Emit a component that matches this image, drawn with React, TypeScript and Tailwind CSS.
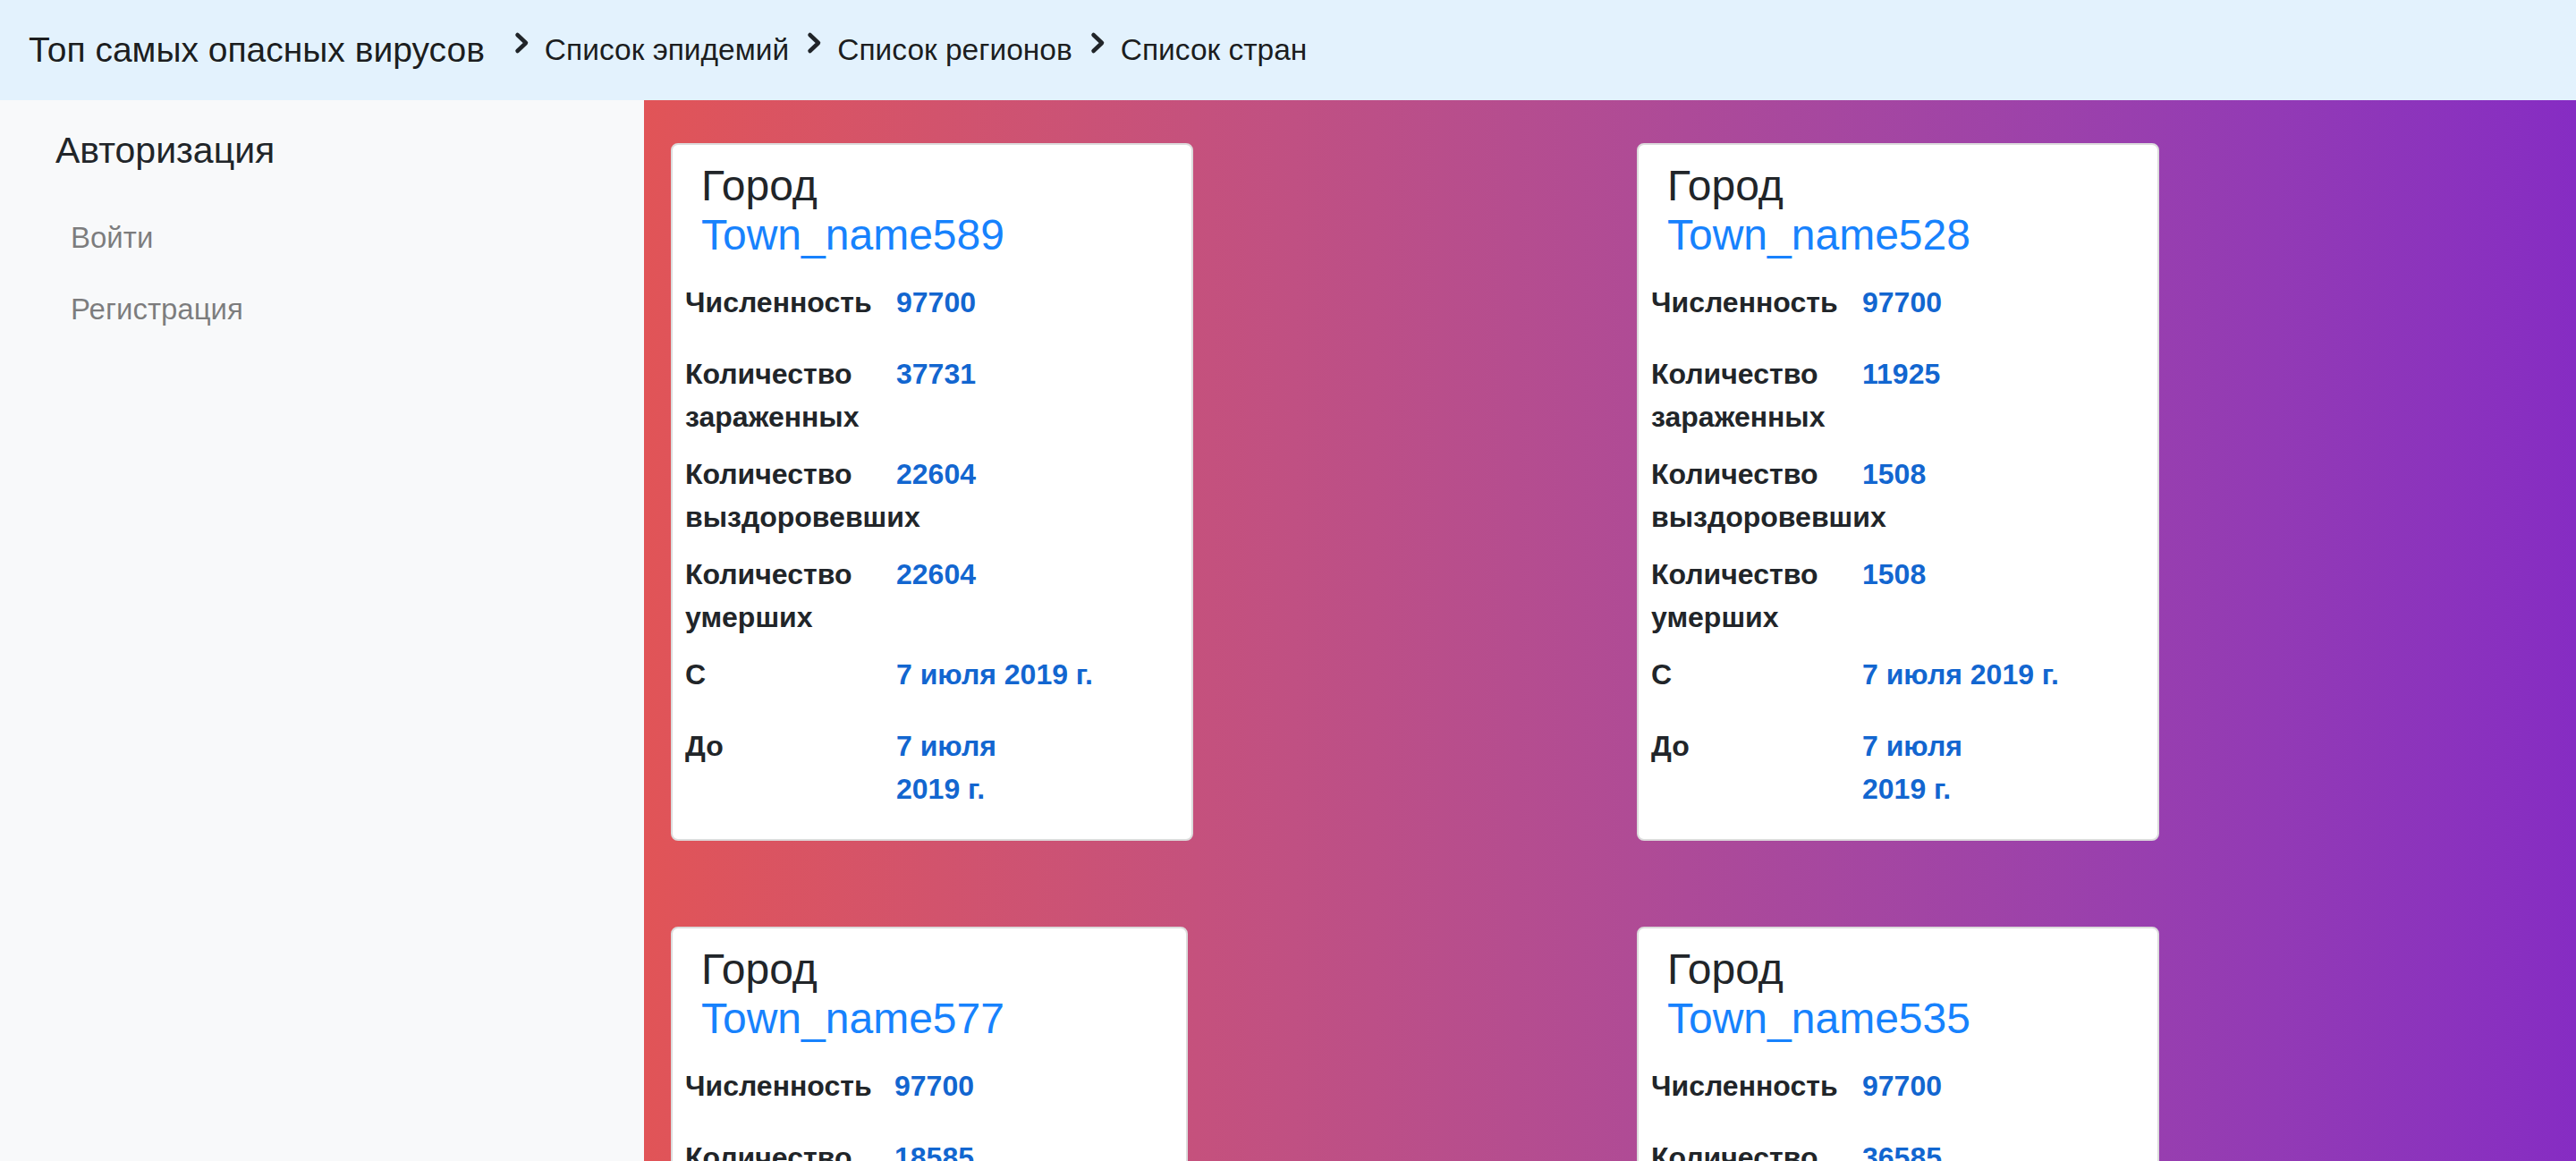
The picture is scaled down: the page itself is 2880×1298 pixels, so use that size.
import { FC } from 'react'

type Row = { label: string; value: string; wrap?: boolean }

type City = {
  name: string
  width: string
  cols: string
  rows: Row[]
}

const mkRows = (pop: string, sick: string, healed: string, dead: string): Row[] => [
  { label: 'Численность', value: pop },
  { label: 'Количество зараженных', value: sick },
  { label: 'Количество выздоровевших', value: healed },
  { label: 'Количество умерших', value: dead },
  { label: 'С', value: '7 июля 2019 г.' },
  { label: 'До', value: '7 июля 2019 г.', wrap: true },
]

const cities: City[] = [
  { name: 'Town_name589', width: 'w-[584px]', cols: 'grid-cols-[236px_1fr]', rows: mkRows('97700', '37731', '22604', '22604') },
  { name: 'Town_name528', width: 'w-[584px]', cols: 'grid-cols-[236px_1fr]', rows: mkRows('97700', '11925', '1508', '1508') },
  { name: 'Town_name577', width: 'w-[578px]', cols: 'grid-cols-[234px_1fr]', rows: mkRows('97700', '18585', '9871', '9871') },
  { name: 'Town_name535', width: 'w-[584px]', cols: 'grid-cols-[236px_1fr]', rows: mkRows('97700', '36585', '24077', '24077') },
]

const Chevron: FC = () => (
  <svg
    viewBox="0 0 17 26"
    className="w-[17px] h-[26px] mb-[16px] shrink-0"
    fill="none"
    stroke="#212529"
    strokeWidth="4.5"
    strokeLinecap="round"
    strokeLinejoin="round"
    aria-hidden="true"
  >
    <polyline points="3.5,4 13,13 3.5,22" />
  </svg>
)

const CityCard: FC<{ city: City }> = ({ city }) => (
  <div
    className={`${city.width} my-[48px] bg-white border-2 border-[#dcdcdc] rounded-lg pt-[18px] px-[14px]`}
  >
    {/* Title */}
    <h4 className="pl-[18px] text-[48px] leading-[55px] text-[#212529]">Город</h4>
    <div className="pl-[18px] text-[48px] leading-[55px] text-[#1782fd]">{city.name}</div>

    <div className="mt-[24px] text-[32px] leading-[48px] font-bold">
      {city.rows.map((row) => (
        <div key={row.label} className={`grid ${city.cols} mb-4`}>
          <div className="text-[#212529]">{row.label}</div>
          <div className="text-[#1266d0] mb-4">
            {row.wrap ? (
              <>
                7 июля
                <br />
                2019 г.
              </>
            ) : (
              row.value
            )}
          </div>
        </div>
      ))}
    </div>
  </div>
)

const App: FC = () => {
  return (
    <div className="min-h-screen flex flex-col font-['Liberation_Sans',Arial,sans-serif]">
      <header className="h-[112px] shrink-0 bg-[#e3f2fd] flex items-center pl-[32px]">
        <span className="text-[39px] leading-[60px] text-black/90">Топ самых опасных вирусов</span>
        <nav className="flex items-center ml-[33px] text-[33.5px] leading-[48px] text-black/90">
          <Chevron />
          <span className="ml-[17px]">Список эпидемий</span>
          <span className="ml-[20px]">
            <Chevron />
          </span>
          <span className="ml-[17px]">Список регионов</span>
          <span className="ml-[20px]">
            <Chevron />
          </span>
          <span className="ml-[17px]">Список стран</span>
        </nav>
      </header>

      <div className="flex flex-1">
        {/* Sidebar */}
        <aside className="w-[720px] shrink-0 bg-[#f8f9fa] pt-[32px] pl-[62px]">
          <h5 className="text-[41px] leading-[48px] font-medium text-[#212529]">Авторизация</h5>
          <nav className="mt-[34px] flex flex-col text-[33px] leading-[48px] text-black/50">
            <a className="px-[17px] py-4">Войти</a>
            <a className="px-[17px] py-4">Регистрация</a>
          </nav>
        </aside>

        {/* Cards */}
        <main className="flex-1 bg-linear-to-r from-[#e15457] to-[#862cc3]">
          <div className="grid grid-cols-2">
            {cities.map((city) => (
              <div key={city.name} className="pl-[30px]">
                <CityCard city={city} />
              </div>
            ))}
          </div>
        </main>
      </div>
    </div>
  )
}

export default App
